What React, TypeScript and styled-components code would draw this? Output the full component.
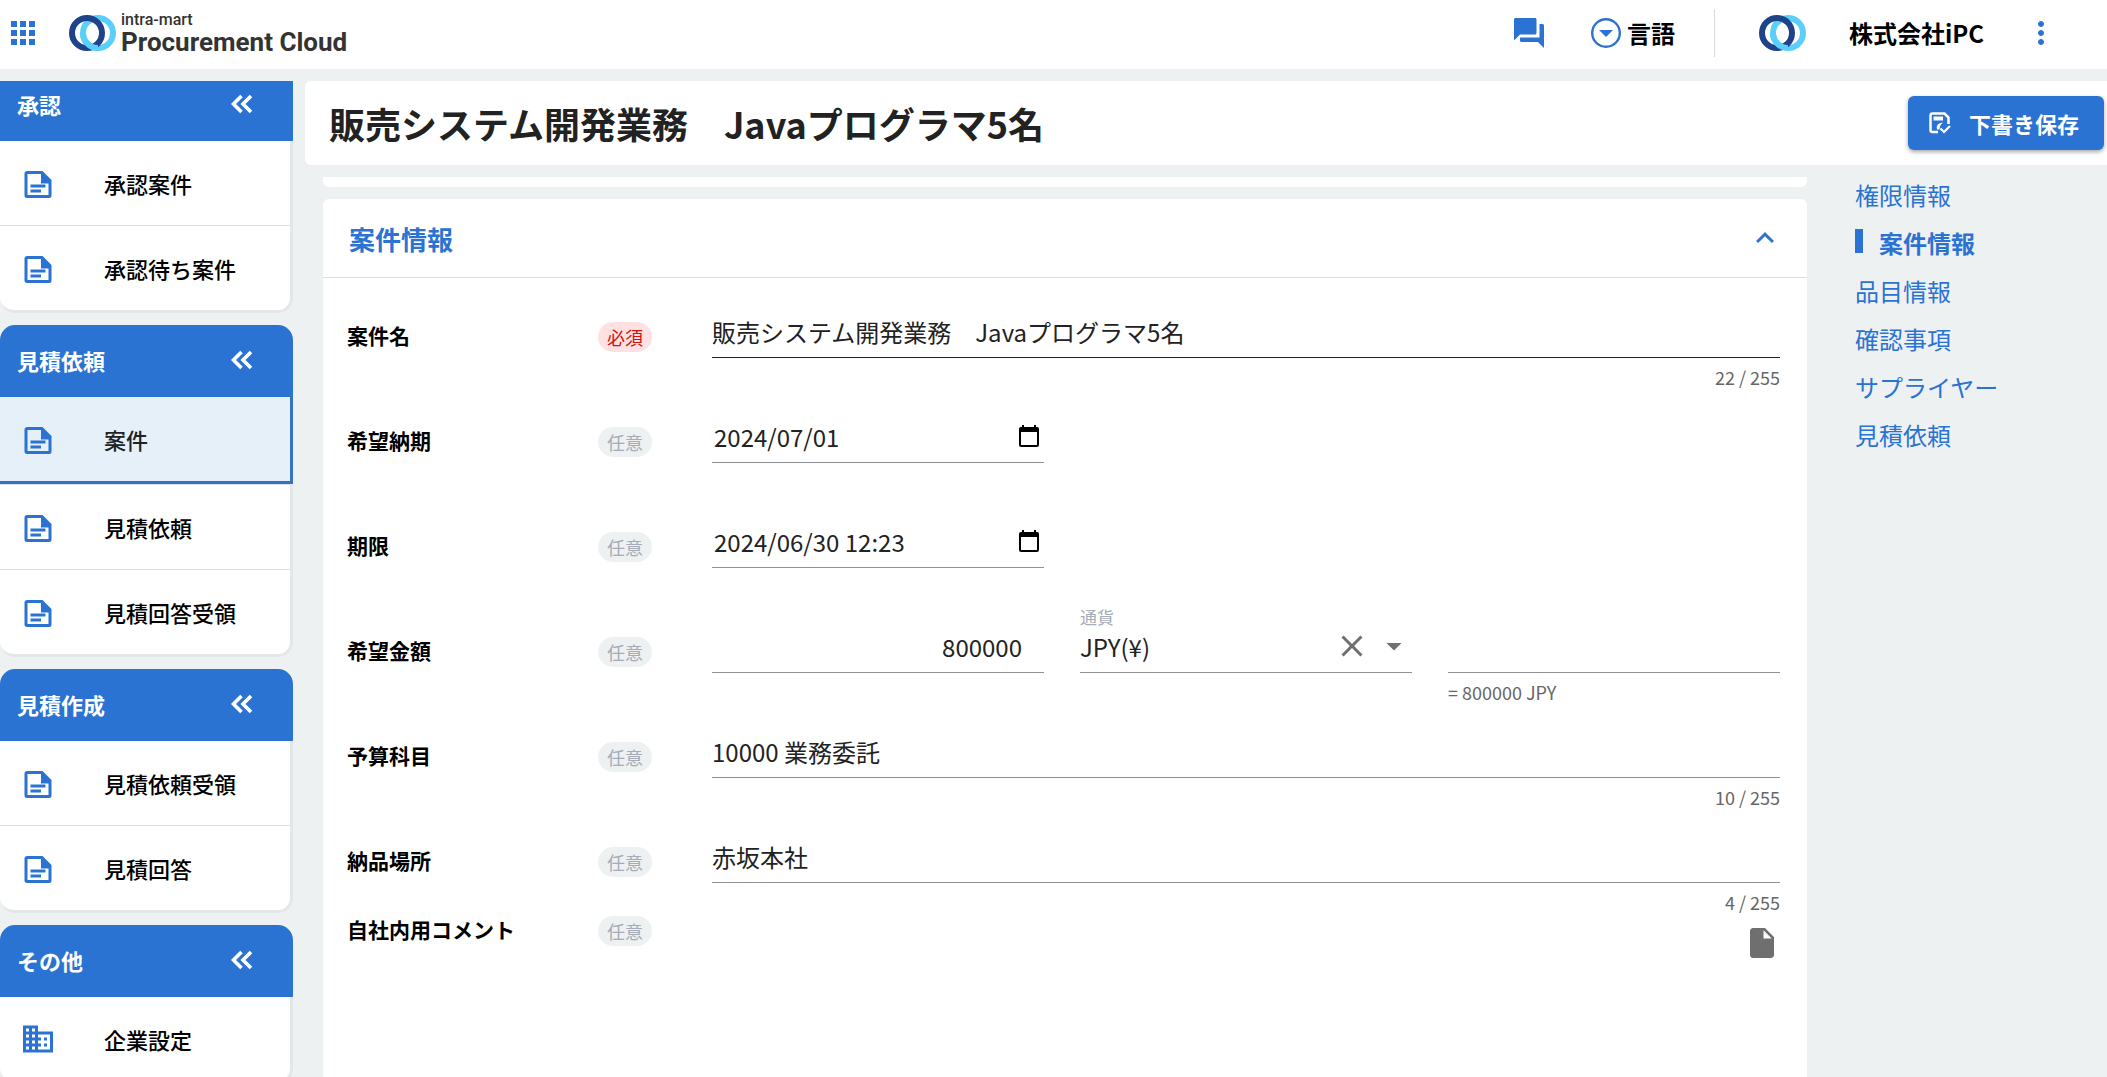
import React from "react";
import styled, { createGlobalStyle, css } from "styled-components";
import {
  MdForum,
  MdMoreVert,
  MdBusiness,
  MdExpandLess,
  MdClear,
  MdArrowDropDown,
  MdInsertDriveFile,
} from "react-icons/md";

const blue = "#2b73d2";
const pageBg = "#edf1f2";
const lineGrey = "#dcdfe1";

const Global = createGlobalStyle`
  *, *::before, *::after { box-sizing: border-box; }
  body {
    margin: 0;
    background: ${pageBg};
    color: #222;
    font-family: "Noto Sans CJK JP", "Noto Sans", sans-serif;
    overflow: hidden;
  }
  button, input, select { font: inherit; color: inherit; }
  button {
    display: inline-flex;
    align-items: center;
    justify-content: center;
    padding: 0;
    border: 0;
    background: none;
    cursor: pointer;
  }
  svg { display: block; flex: none; }
`;

const Page = styled.div`
  display: flex;
  flex-direction: column;
  gap: 12px;
  height: 100vh;
`;

/* ---------- header ---------- */

const Header = styled.header`
  display: flex;
  align-items: center;
  flex: none;
  height: 69px;
  padding: 0 48px 4px 11px;
  background: #fff;
  color: ${blue};
`;

const Brand = styled.a`
  display: flex;
  align-items: center;
  gap: 5px;
  margin: 0 auto 0 34px;
  color: #333;
  text-decoration: none;
  font-family: Roboto, sans-serif;
`;

const BrandText = styled.span`
  display: flex;
  flex-direction: column;
`;

const BrandSmall = styled.span`
  font-size: 16px;
  font-weight: 500;
  line-height: 18px;
`;

const BrandLarge = styled.span`
  font-size: 26px;
  font-weight: 700;
  line-height: 26px;
`;

const Language = styled.button`
  gap: 3px;
  margin-left: 41px;
  color: ${blue};
  font-size: 24px;
  font-weight: 700;
`;

const DarkText = styled.span`
  color: #000;
`;

const Divider = styled.span`
  width: 1px;
  height: 48px;
  margin: 0 44px 0 39px;
  background: #d9dcde;
`;

const Company = styled.span`
  margin: 0 39px 0 43px;
  color: #000;
  font-size: 24px;
  font-weight: 700;
`;

const IconButton = styled.button`
  color: ${blue};
`;

/* ---------- sidebar ---------- */

const Columns = styled.div`
  display: flex;
  gap: 12px;
  flex: 1;
  min-height: 0;
`;

const Sidebar = styled.nav`
  display: flex;
  flex-direction: column;
  gap: 12px;
  flex: none;
  width: 293px;
  overflow: hidden;
`;

const Group = styled.section`
  flex: none;
`;

const GroupHead = styled.h2<{ $cut?: boolean }>`
  display: flex;
  align-items: center;
  justify-content: space-between;
  height: ${(p) => (p.$cut ? 60 : 72)}px;
  margin: 0;
  padding: 0 33px ${(p) => (p.$cut ? 14 : 2)}px 17px;
  border-radius: ${(p) => (p.$cut ? 0 : "15px 15px 0 0")};
  background: ${blue};
  color: #fff;
  font-size: 22px;
  font-weight: 700;
  line-height: 32px;
`;

const GroupList = styled.ul`
  margin: 0;
  padding: 0;
  list-style: none;
  background: #fff;
  border: solid #e4e7e8;
  border-width: 0 3px 3px 0;
  border-radius: 0 0 15px 15px;
`;

const GroupItem = styled.li<{ $active?: boolean }>`
  & + & { border-top: 1px solid ${lineGrey}; }
  ${(p) =>
    p.$active &&
    css`
      margin-right: -3px;
      background: #e6f0f9;
      border: solid #3470c4;
      border-width: 0 3px 3px 0;
    `}
`;

const GroupLink = styled.a<{ $active?: boolean }>`
  display: flex;
  align-items: center;
  gap: 48px;
  height: 84px;
  padding-left: 20px;
  color: ${(p) => (p.$active ? "#222" : "#000")};
  font-size: 22px;
  font-weight: 500;
  text-decoration: none;
  svg { color: ${blue}; }
`;

/* ---------- main area ---------- */

const Main = styled.main`
  display: flex;
  flex-direction: column;
  gap: 12px;
  flex: 1;
  min-width: 0;
`;

const TitleBar = styled.div`
  display: flex;
  align-items: center;
  justify-content: space-between;
  flex: none;
  height: 84px;
  padding: 0 3px 0 24px;
  border-radius: 6px 0 0 6px;
  background: #fff;
`;

const Title = styled.h1`
  margin: 0;
  font-size: 36px;
  font-weight: 700;
  line-height: 54px;
`;

const SaveButton = styled.button`
  gap: 18px;
  height: 54px;
  padding: 0 25px 0 21px;
  border-radius: 6px;
  background: ${blue};
  color: #fff;
  font-size: 22px;
  font-weight: 700;
  box-shadow: 0 2px 4px rgba(0, 0, 0, 0.35);
`;

const Body = styled.div`
  display: flex;
  gap: 48px;
  flex: 1;
  min-height: 0;
  padding-left: 18px;
`;

const Cards = styled.div`
  display: flex;
  flex-direction: column;
  gap: 12px;
  flex: 1;
  min-width: 0;
`;

const PreviousCard = styled.div`
  flex: none;
  height: 10px;
  border-radius: 0 0 6px 6px;
  background: #fff;
`;

const Card = styled.section`
  flex: 1;
  border-radius: 6px 6px 0 0;
  background: #fff;
`;

const CardHead = styled.div`
  display: flex;
  align-items: center;
  justify-content: space-between;
  height: 79px;
  padding: 0 24px 0 26px;
  border-bottom: 1px solid ${lineGrey};
`;

const CardTitle = styled.h2`
  margin: 0;
  color: ${blue};
  font-size: 26px;
  font-weight: 700;
`;

const Form = styled.form`
  padding: 35px 27px 0 24px;
`;

const Row = styled.div<{ $tight?: boolean }>`
  display: grid;
  grid-template-columns: 251px 114px 1fr;
  align-items: start;
  height: ${(p) => (p.$tight ? 69 : 105)}px;
`;

const Label = styled.label`
  color: #000;
  font-size: 21px;
  font-weight: 700;
  line-height: 44px;
`;

const Badge = styled.span<{ $required?: boolean }>`
  justify-self: start;
  width: 54px;
  margin-top: 9px;
  border-radius: 15px;
  background: ${(p) => (p.$required ? "#ffe1e1" : pageBg)};
  color: ${(p) => (p.$required ? "#d40f0f" : "#a5abb9")};
  font-size: 18px;
  line-height: 30px;
  text-align: center;
`;

const Thirds = styled.div`
  display: grid;
  grid-template-columns: repeat(3, 1fr);
  gap: 36px;
`;

const Cell = styled.div`
  position: relative;
  min-width: 0;
`;

const FieldBox = styled.div<{ $strong?: boolean }>`
  display: flex;
  align-items: center;
  height: 45px;
  padding-bottom: 8px;
  border-bottom: 1px solid ${(p) => (p.$strong ? "#222" : "#8f9194")};
`;

const Input = styled.input<{ $right?: boolean }>`
  flex: 1;
  min-width: 0;
  width: 100%;
  height: 36px;
  padding: 0 ${(p) => (p.$right ? 22 : 0)}px 0 0;
  border: 0;
  outline: 0;
  background: none;
  font-size: 24px;
  text-align: ${(p) => (p.$right ? "right" : "left")};
`;

const DateInput = styled(Input)`
  padding-left: 2px;
`;

const Select = styled.select`
  flex: 1;
  min-width: 0;
  height: 36px;
  padding: 0;
  border: 0;
  outline: 0;
  appearance: none;
  background: none;
  font-size: 24px;
`;

const GreyButton = styled.button`
  color: #6f6f6f;
  & + svg { margin-left: 6px; color: #6f6f6f; }
`;

const CalendarButton = styled.button`
  padding-right: 5px;
  color: #000;
`;

const FloatingLabel = styled.label`
  position: absolute;
  top: -23px;
  left: 0;
  color: #a5abb9;
  font-size: 17px;
  line-height: 24px;
`;

const Hint = styled.div<{ $right?: boolean }>`
  margin-top: 7px;
  color: #666;
  font-size: 18px;
  line-height: 24px;
  text-align: ${(p) => (p.$right ? "right" : "left")};
`;

const Attach = styled.div`
  display: flex;
  justify-content: flex-end;
  padding-top: 18px;
`;

/* ---------- section index ---------- */

const Index = styled.nav`
  display: flex;
  flex-direction: column;
  gap: 12px;
  flex: none;
  width: 252px;
`;

const IndexLink = styled.a<{ $active?: boolean }>`
  display: flex;
  align-items: center;
  gap: 16px;
  color: ${blue};
  font-size: 24px;
  font-weight: ${(p) => (p.$active ? 700 : 400)};
  line-height: 36px;
  text-decoration: none;
  ${(p) =>
    p.$active &&
    css`
      &::before {
        content: "";
        width: 8px;
        height: 24px;
        margin-bottom: 4px;
        background: ${blue};
      }
    `}
`;

/* ---------- drawings ---------- */

const Rings = () => (
  <svg width="47" height="36" viewBox="0 0 47 36" fill="none" strokeWidth="6" aria-hidden="true">
    <circle cx="29" cy="18" r="15" stroke="#5bcffc" />
    <circle cx="18" cy="18" r="15" stroke="#1f4288" />
    <path d="M14 18A15 15 0 0 0 29 33" stroke="#5bcffc" />
  </svg>
);

const AppsGrid = () => (
  <svg width="24" height="24" viewBox="0 0 24 24" fill="currentColor" aria-hidden="true">
    {[0, 9, 18].map((y) => [0, 9, 18].map((x) => <rect key={`${x}-${y}`} x={x} y={y} width="6" height="6" />))}
  </svg>
);

const CircledCaret = () => (
  <svg width="36" height="36" viewBox="0 0 36 36" aria-hidden="true">
    <circle cx="18" cy="18" r="13.8" fill="none" stroke="currentColor" strokeWidth="2.4" />
    <path d="M11 15H25L18 22Z" fill="currentColor" />
  </svg>
);

const DoubleChevron = () => (
  <svg width="36" height="36" viewBox="0 0 36 36" fill="none" stroke="currentColor" strokeWidth="3.6" aria-hidden="true">
    <path d="M17.500 10L9.500 18L17.500 26M27 10L19 18L27 26" />
  </svg>
);

const DocIcon = () => (
  <svg width="36" height="36" viewBox="0 0 36 36" aria-hidden="true">
    <path
      d="M7.500 6H22.500L31.500 15V30.500Q31.500 33 29 33H7.500Q4.500 33 4.500 30.500V8.500Q4.500 6 7.500 6ZM7.500 9V30H28.500V18.500H21V9Z"
      fill="currentColor"
      fillRule="evenodd"
    />
    <path d="M10.500 19.500H25.500V22.500H10.500ZM10.500 24.500H21V27.500H10.500Z" fill="currentColor" />
  </svg>
);

const CalendarIcon = () => (
  <svg width="20" height="22" viewBox="0 0 20 22" aria-hidden="true">
    <path
      d="M3 0H5V2H15V0H17V2H18Q20 2 20 4V20Q20 22 18 22H2Q0 22 0 20V4Q0 2 2 2H3ZM2 7V20H18V7Z"
      fill="currentColor"
      fillRule="evenodd"
    />
  </svg>
);

const SaveIcon = () => (
  <svg width="22" height="22" viewBox="0 0 22 22" fill="none" stroke="currentColor" strokeWidth="2.5" aria-hidden="true">
    <path d="M9 20H3.500Q1.500 20 1.500 18V3.500Q1.500 1.500 3.500 1.500H15.500L19.500 5.500V12" />
    <path d="M4.500 4.500H14V8.500H4.500Z" fill="currentColor" stroke="none" />
    <path d="M8 17.500Q6.500 11 14 10.500Q10.500 13 10.500 17.500Z" fill="currentColor" stroke="none" />
    <path d="M11.500 16.500L15 20L21 14" strokeWidth="2.2" />
  </svg>
);

/* ---------- data ---------- */

type MenuGroup = { title: string; items: string[]; active?: string; cut?: boolean };

const menu: MenuGroup[] = [
  { title: "承認", items: ["承認案件", "承認待ち案件"], cut: true },
  { title: "見積依頼", items: ["案件", "見積依頼", "見積回答受領"], active: "案件" },
  { title: "見積作成", items: ["見積依頼受領", "見積回答"] },
  { title: "その他", items: ["企業設定"] },
];

const sections = ["権限情報", "案件情報", "品目情報", "確認事項", "サプライヤー", "見積依頼"];

type RowProps = {
  id: string;
  label: string;
  required?: boolean;
  tight?: boolean;
  children: React.ReactNode;
};

const FormRow = ({ id, label, required, tight, children }: RowProps) => (
  <Row $tight={tight}>
    <Label htmlFor={id}>{label}</Label>
    <Badge $required={required}>{required ? "必須" : "任意"}</Badge>
    {children}
  </Row>
);

const TextField = ({ id, value, strong }: { id: string; value: string; strong?: boolean }) => {
  const [text, setText] = React.useState(value);
  return (
    <Cell>
      <FieldBox $strong={strong}>
        <Input id={id} value={text} maxLength={255} onChange={(e) => setText(e.target.value)} />
      </FieldBox>
      <Hint $right>{text.length} / 255</Hint>
    </Cell>
  );
};

const DateField = ({ id, value }: { id: string; value: string }) => (
  <Thirds>
    <FieldBox>
      <DateInput id={id} defaultValue={value} />
      <CalendarButton type="button" aria-label="カレンダー">
        <CalendarIcon />
      </CalendarButton>
    </FieldBox>
  </Thirds>
);

export default function App() {
  return (
    <Page>
      <Global />
      <Header>
        <IconButton type="button" aria-label="アプリ">
          <AppsGrid />
        </IconButton>
        <Brand href="#">
          <Rings />
          <BrandText>
            <BrandSmall>intra-mart</BrandSmall>
            <BrandLarge>Procurement Cloud</BrandLarge>
          </BrandText>
        </Brand>
        <IconButton type="button" aria-label="メッセージ">
          <MdForum size={36} />
        </IconButton>
        <Language type="button">
          <CircledCaret />
          <DarkText>言語</DarkText>
        </Language>
        <Divider />
        <Rings />
        <Company>株式会社iPC</Company>
        <IconButton type="button" aria-label="メニュー">
          <MdMoreVert size={36} />
        </IconButton>
      </Header>

      <Columns>
        <Sidebar>
          {menu.map((group) => (
            <Group key={group.title}>
              <GroupHead $cut={group.cut}>
                {group.title}
                <button type="button" aria-label={`${group.title}を閉じる`}>
                  <DoubleChevron />
                </button>
              </GroupHead>
              <GroupList>
                {group.items.map((item) => (
                  <GroupItem key={item} $active={item === group.active}>
                    <GroupLink href="#" $active={item === group.active}>
                      {item === "企業設定" ? <MdBusiness size={36} /> : <DocIcon />}
                      {item}
                    </GroupLink>
                  </GroupItem>
                ))}
              </GroupList>
            </Group>
          ))}
        </Sidebar>

        <Main>
          <TitleBar>
            <Title>販売システム開発業務　Javaプログラマ5名</Title>
            <SaveButton type="button">
              <SaveIcon />
              下書き保存
            </SaveButton>
          </TitleBar>

          <Body>
            <Cards>
              <PreviousCard />
              <Card>
                <CardHead>
                  <CardTitle>案件情報</CardTitle>
                  <IconButton type="button" aria-label="折りたたむ">
                    <MdExpandLess size={36} />
                  </IconButton>
                </CardHead>
                <Form>
                  <FormRow id="name" label="案件名" required>
                    <TextField id="name" value="販売システム開発業務　Javaプログラマ5名" strong />
                  </FormRow>
                  <FormRow id="delivery" label="希望納期">
                    <DateField id="delivery" value="2024/07/01" />
                  </FormRow>
                  <FormRow id="deadline" label="期限">
                    <DateField id="deadline" value="2024/06/30 12:23" />
                  </FormRow>
                  <FormRow id="amount" label="希望金額">
                    <Thirds>
                      <FieldBox>
                        <Input id="amount" $right inputMode="numeric" defaultValue="800000" />
                      </FieldBox>
                      <Cell>
                        <FloatingLabel htmlFor="currency">通貨</FloatingLabel>
                        <FieldBox>
                          <Select id="currency" defaultValue="JPY">
                            <option value="JPY">JPY(¥)</option>
                          </Select>
                          <GreyButton type="button" aria-label="クリア">
                            <MdClear size={36} />
                          </GreyButton>
                          <MdArrowDropDown size={36} />
                        </FieldBox>
                      </Cell>
                      <Cell>
                        <FieldBox>
                          <Input aria-label="換算金額" />
                        </FieldBox>
                        <Hint>= 800000 JPY</Hint>
                      </Cell>
                    </Thirds>
                  </FormRow>
                  <FormRow id="budget" label="予算科目">
                    <TextField id="budget" value="10000 業務委託" />
                  </FormRow>
                  <FormRow id="place" label="納品場所" tight>
                    <TextField id="place" value="赤坂本社" />
                  </FormRow>
                  <FormRow id="comment" label="自社内用コメント">
                    <Attach>
                      <GreyButton id="comment" type="button" aria-label="コメントを追加">
                        <MdInsertDriveFile size={36} />
                      </GreyButton>
                    </Attach>
                  </FormRow>
                </Form>
              </Card>
            </Cards>

            <Index>
              {sections.map((name) => (
                <IndexLink key={name} href="#" $active={name === "案件情報"}>
                  {name}
                </IndexLink>
              ))}
            </Index>
          </Body>
        </Main>
      </Columns>
    </Page>
  );
}
